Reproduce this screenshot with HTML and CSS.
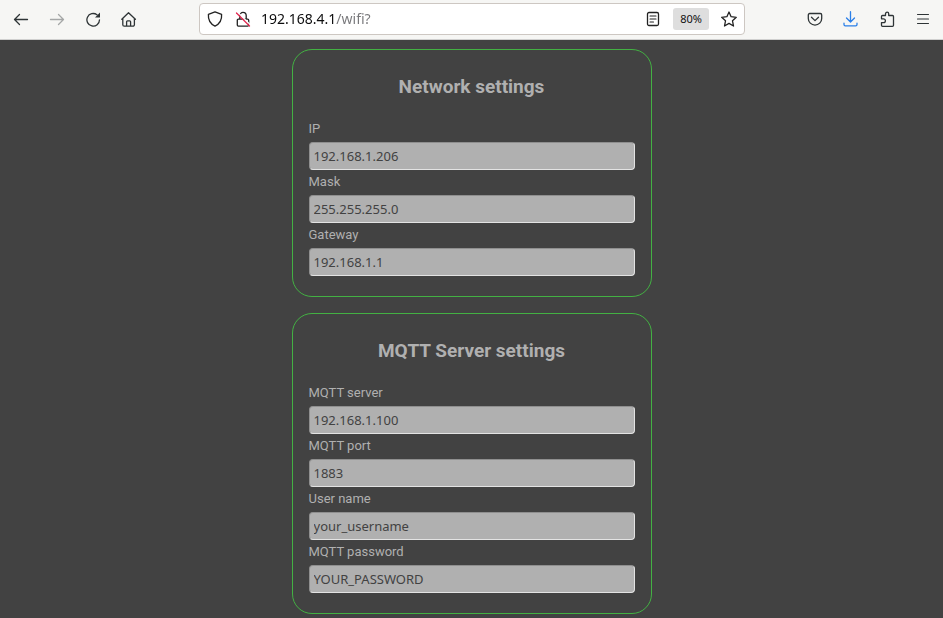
FILE: index.html
```html
<!DOCTYPE html>
<html lang="en">
<head>
<meta charset="utf-8">
<title>Settings</title>
<link rel="stylesheet" href="styles.css">
</head>
<body>
<header class="toolbar">
  <nav class="group" aria-label="Navigation">
    <button class="tool" type="button" aria-label="Back"><svg viewBox="0 0 16 16"><path d="M14.500 8.500H1.500M6.500 3.500l-5 5 5 5"/></svg></button>
    <button class="tool" type="button" aria-label="Forward" disabled><svg viewBox="0 0 16 16"><path d="M1.500 8.500h13M9.500 3.500l5 5-5 5"/></svg></button>
    <button class="tool" type="button" aria-label="Reload"><svg viewBox="0 0 16 16"><path d="M14.500 8.800A6.300 6.300 0 1 1 12 3.800"/><path class="solid" d="M15 1.500v5H10z"/></svg></button>
    <button class="tool" type="button" aria-label="Home"><svg viewBox="0 0 16 16"><path d="M.8 8.200 7.500 1.700l6.900 6.500M1.800 7.500v6.200a1.500 1.500 0 0 0 1.500 1.500h8.600a1.500 1.500 0 0 0 1.500-1.500V7.500M5.600 15v-4.300a.9.900 0 0 1 .9-.9h2.200a.9.900 0 0 1 .9.900V15"/></svg></button>
  </nav>
  <div class="address">
    <button class="mini" type="button" aria-label="Protection"><svg viewBox="0 0 16 16"><path d="M8 .9 14.600 3.300C15 8.500 12.800 12.800 8 15.200 3.200 12.800 1 8.500 1.400 3.300z"/></svg></button>
    <button class="mini" type="button" aria-label="Connection not secure"><svg viewBox="0 0 16 16"><path d="M4.800 7.800V4.600a3.200 3.200 0 0 1 6.400 0V8M3.300 8.200h9.400a1 1 0 0 1 1 1v4.900a1 1 0 0 1-1 1H3.300a1 1 0 0 1-1-1V9.200a1 1 0 0 1 1-1z"/><path class="halo" d="M2.500 1 15.500 14"/><path class="slash" d="M1.500 2 14.500 15"/></svg></button>
    <input class="url" type="text" aria-label="Address" value="192.168.4.1/wifi?">
    <button class="mini" type="button" aria-label="Reader view"><svg viewBox="0 0 16 16"><rect x="2.500" y="1.500" width="11" height="13" rx="1.500"/><path class="thin" d="M5 5h6M5 8h6M5 11h3.500"/></svg></button>
    <button class="zoom" type="button">80%</button>
    <button class="mini" type="button" aria-label="Bookmark"><svg viewBox="0 0 16 16"><path d="m8 1 2.100 4.700 5.200.6-3.800 3.500 1 5.200L8 12.400l-4.500 2.600 1-5.200L.7 6.300l5.200-.6z"/></svg></button>
  </div>
  <div class="group">
    <button class="tool" type="button" aria-label="Pocket"><svg viewBox="0 0 16 16"><path d="M2.700 2.500h10.600a1.400 1.400 0 0 1 1.400 1.400v3.500a6.700 6.700 0 0 1-13.400 0V3.900a1.400 1.400 0 0 1 1.400-1.400zM4.500 6.300 8 9.600 11.500 6.300"/></svg></button>
    <button class="tool download" type="button" aria-label="Downloads"><svg viewBox="0 0 16 16"><path d="M7.500.7v10M3.500 7 7.500 11l4-4M1 12.200v1.300a1.300 1.300 0 0 0 1.300 1.300h10.400a1.300 1.300 0 0 0 1.300-1.300v-1.300"/></svg></button>
    <button class="tool" type="button" aria-label="Extensions"><svg viewBox="0 0 16 16"><path d="M2.500 7.800V5.500a1 1 0 0 1 1-1h3V2.800a1.600 1.600 0 0 1 3.200 0v1.700h3.800a1 1 0 0 1 1 1v8.800a1 1 0 0 1-1 1h-10a1 1 0 0 1-1-1v-2.700h2a1.900 1.900 0 0 0 0-3.800z"/></svg></button>
    <button class="tool" type="button" aria-label="Menu"><svg viewBox="0 0 16 16"><path class="thin" d="M2.500 3.500h11M2.500 8h11M2.500 12.500h11"/></svg></button>
  </div>
</header>
<main>
  <form class="settings">
    <section class="card">
      <h1>Network settings</h1>
      <label for="ip">IP</label>
      <input id="ip" type="text" value="192.168.1.206">
      <label for="mask">Mask</label>
      <input id="mask" type="text" value="255.255.255.0">
      <label for="gateway">Gateway</label>
      <input id="gateway" type="text" value="192.168.1.1">
    </section>
    <section class="card">
      <h1>MQTT Server settings</h1>
      <label for="server">MQTT server</label>
      <input id="server" type="text" value="192.168.1.100">
      <label for="port">MQTT port</label>
      <input id="port" type="text" value="1883">
      <label for="user">User name</label>
      <input id="user" type="text" value="your_username">
      <label for="password">MQTT password</label>
      <input id="password" type="text" value="YOUR_PASSWORD">
    </section>
  </form>
</main>
</body>
</html>
```
FILE: styles.css
```css
* { box-sizing: border-box; }

body {
  margin: 0;
  background: #424242;
  font-family: Roboto, sans-serif;
}

.toolbar {
  display: flex;
  align-items: center;
  height: 40px;
  padding: 0 2px 2px 3px;
  background: #f6f6f4;
  border-bottom: 1px solid #d0d0cf;
}

.group { display: flex; }

button {
  display: flex;
  align-items: center;
  justify-content: center;
  padding: 0;
  border: 0;
  background: none;
  color: #2e3436;
}

.tool { width: 36px; height: 32px; }
.tool:disabled { opacity: 0.4; }
.mini { width: 28px; height: 28px; color: #222; }
.download { color: #2a7fe8; }

svg {
  width: 16px;
  height: 16px;
  fill: none;
  stroke: currentColor;
  stroke-width: 1.3;
  stroke-linecap: round;
  stroke-linejoin: round;
}

.solid { fill: currentColor; stroke: none; }
.thin { stroke-width: 1.1; }
.halo { stroke: #fff; }
.slash { stroke: #e22850; }

.address {
  display: flex;
  align-items: center;
  flex: 1;
  min-width: 0;
  height: 32px;
  margin: 0 52px;
  padding: 0 1px;
  background: #fff;
  border: 1px solid #cdc7c2;
  border-radius: 4px;
}

.url {
  flex: 1;
  min-width: 0;
  height: 28px;
  padding: 0 4px;
  border: 0;
  outline: 0;
  background: linear-gradient(90deg, #0c0c0d 79px, #77777a 79px);
  background-clip: text;
  color: transparent;
  font: 14px "Noto Sans", sans-serif;
}

.zoom {
  width: 36px;
  height: 22px;
  margin: 0 6px;
  border-radius: 3px;
  background: #dedede;
  color: #111;
  font: 11px "Noto Sans", sans-serif;
}

main { padding: 9px 16px 5px; }

.settings {
  display: grid;
  gap: 16px;
  max-width: 360px;
  margin: 0 auto;
}

.card {
  padding: 25px 16px 20px;
  border: 1px solid #43b143;
  border-radius: 20px;
  color: #b0b0b0;
}

h1 {
  margin: 0 0 18px;
  font-size: 19px;
  line-height: 24px;
  text-align: center;
}

label {
  display: block;
  margin-bottom: 2px;
  font-size: 13px;
  line-height: 23px;
}

.card input {
  display: block;
  width: 100%;
  height: 28px;
  padding: 0 4px;
  border: 1px solid;
  border-color: #8f8f8f #e3e3e3 #e3e3e3 #8f8f8f;
  border-radius: 4px;
  background: #b0b0b0;
  color: #424242;
  font: 13px "Noto Sans", sans-serif;
}
```
